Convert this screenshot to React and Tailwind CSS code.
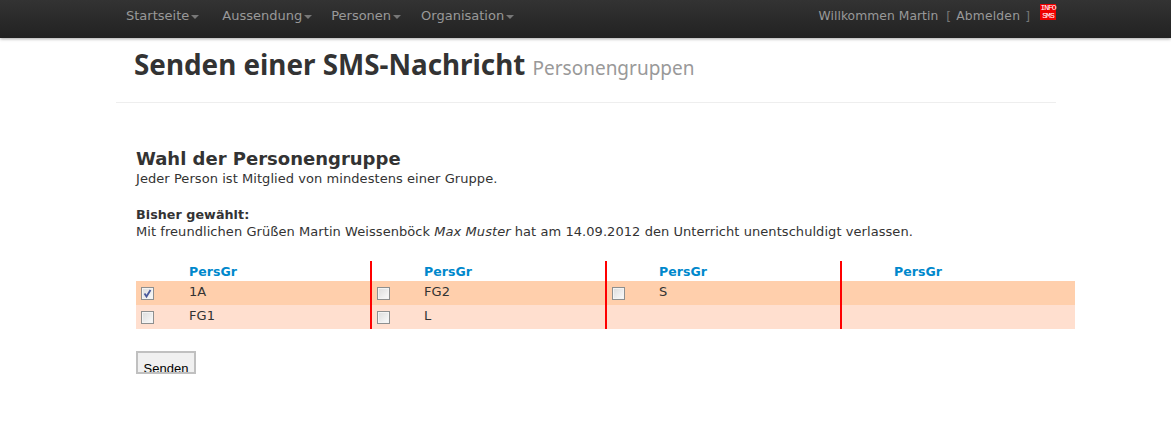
const menu = ['Startseite', 'Aussendung', 'Personen', 'Organisation'];
const menuGaps = ['mr-[23px]', 'mr-[19px]', 'mr-[20px]', ''];
const rows = [
  { bg: 'bg-[#ffcfac]', cells: [{ label: '1A', checked: true }, { label: 'FG2' }, { label: 'S' }, null] },
  { bg: 'bg-[#ffdfcf]', cells: [{ label: 'FG1' }, { label: 'L' }, null, null] },
];
const colWidths = ['w-[236px]', 'w-[235px]', 'w-[235px]', 'w-[233px]'];

function Checkbox({ checked }) {
  return (
    <span className="relative block w-[13px] h-[13px] border border-[#8e8f8f] bg-gradient-to-br from-[#dcdcdc] to-[#fbfbfb] outline outline-1 -outline-offset-2 outline-[#f4f4f4]">
      {checked && (
        <svg viewBox="0 0 13 13" className="absolute -left-px -top-px w-[13px] h-[13px]">
          <path d="M3.5 6.5 L5.5 9.5 L9.5 3" fill="none" stroke="#4a5a9c" strokeWidth="1.8" />
        </svg>
      )}
    </span>
  );
}

export default function App() {
  return (
    <div className="min-h-[434px] bg-white text-[#333333] font-['Verdana','DejaVu_Sans',sans-serif] text-[13px] tracking-[0.06px]">
      {/* Navbar */}
      <div className="h-[38px] bg-gradient-to-b from-[#333333] to-[#222222] shadow-[0_1px_3px_rgba(0,0,0,0.35)]">
        <div className="w-[940px] ml-[116px] flex justify-between">
          <ul className="flex pl-[10px] pt-[8px] text-[#999999] text-[13px] tracking-normal leading-[16px]">
            {menu.map((item, i) => (
              <li key={item} className={`flex items-center ${menuGaps[i]}`}>
                {item}
                <span className="ml-[2px] mt-[1px] border-x-[4px] border-x-transparent border-t-[4px] border-t-[#777777]" />
              </li>
            ))}
          </ul>
          <div className="flex items-start text-[#999999] text-[12.3px] pt-[8px] leading-[16px]">
            <span>Willkommen Martin</span>
            <span className="ml-[8px] text-[#777777]">[</span>
            <span className="ml-[5px] tracking-[0.2px]">Abmelden</span>
            <span className="ml-[5px] text-[#777777]">]</span>
            <span className="mt-[-4px] ml-[10px] w-[16px] h-[16px] bg-[#ee0000] text-white font-['Liberation_Mono',monospace] text-[8px] tracking-[-1px] leading-[8px] text-center">
              <span className="block">INFO</span>
              <span className="block">SMS</span>
            </span>
          </div>
        </div>
      </div>

      {/* Page header */}
      <div className="w-[940px] ml-[116px] h-[65px] border-b border-[#eeeeee] pl-[18px] pt-[8px]">
        <h1 className="font-['Noto_Sans',sans-serif] text-[27.8px] font-bold leading-[36px] tracking-normal">
          Senden einer SMS-Nachricht{' '}
          <small className="text-[19px] font-normal text-[#999999]">Personengruppen</small>
        </h1>
      </div>

      <div className="ml-[136px] w-[939px]">
        <h2 className="mt-[45px] text-[18px] font-bold leading-[22px] tracking-normal">Wahl der Personengruppe</h2>
        <p className="leading-[18px]">Jeder Person ist Mitglied von mindestens einer Gruppe.</p>

        <p className="mt-[18px] text-[12.7px] font-bold leading-[18px]">Bisher gewählt:</p>
        <p className="leading-[16px]">
          Mit freundlichen Grüßen Martin Weissenböck <em>Max Muster</em> hat am 14.09.2012 den Unterricht unentschuldigt verlassen.
        </p>

        {/* Group table */}
        <div className="mt-[21px]">
          <div className="flex h-[20px]">
            {colWidths.map((w, i) => (
              <div key={i} className={`${w} shrink-0 ${i === 0 ? 'pl-[53px]' : 'pl-[52px]'} pt-[2px] text-[12.5px] font-bold text-[#0088cc] leading-[18px] ${i < 3 ? 'border-r-2 border-[#ff0000]' : ''}`}>
                PersGr
              </div>
            ))}
          </div>
          {rows.map((row, r) => (
            <div key={r} className={`flex h-[24px] ${row.bg}`}>
              {row.cells.map((cell, i) => (
                <div key={i} className={`${colWidths[i]} shrink-0 flex ${i < 3 ? 'border-r-2 border-[#ff0000]' : ''}`}>
                  {cell && (
                    <>
                      <span className={`ml-[5px] mt-[6px] ${i === 0 ? 'w-[48px]' : 'w-[47px]'}`}>
                        <Checkbox checked={cell.checked} />
                      </span>
                      <span className="leading-[22px]">{cell.label}</span>
                    </>
                  )}
                </div>
              ))}
            </div>
          ))}
        </div>

        <div className="mt-[22px] w-[60px] h-[23px] overflow-hidden border-2 border-[#c0c0c0] bg-[#f0f0f0]">
          <button className="block w-full pt-[8px] text-center text-black font-['Liberation_Sans',sans-serif] text-[13px] leading-[15px] tracking-normal">
            Senden
          </button>
        </div>
      </div>
    </div>
  );
}
